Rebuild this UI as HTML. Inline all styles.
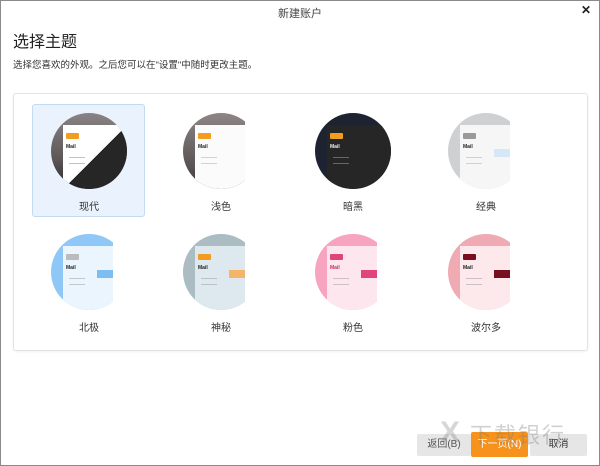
<!DOCTYPE html>
<html><head><meta charset="utf-8"><style>
*{margin:0;padding:0;box-sizing:border-box}
body{width:600px;height:466px;overflow:hidden;background:#fff;font-family:"Liberation Sans","Noto Sans CJK SC",sans-serif;position:relative;color:#333}
.win{position:absolute;left:0;top:0;width:600px;height:466px;border:1px solid #8a8a8a}
.title{position:absolute;top:5px;left:0;width:600px;text-align:center;font-size:11px;color:#444}
.close{position:absolute;top:3px;left:581px;font-size:12px;font-weight:bold;color:#222}
h1{position:absolute;left:13px;top:28px;font-size:16px;font-weight:normal;color:#222}
.sub{position:absolute;left:13px;top:57px;font-size:9.5px;color:#333}
.panel{position:absolute;left:13px;top:93px;width:575px;height:258px;border:1px solid #e3e3e3;border-radius:3px;box-shadow:0 1px 2px rgba(0,0,0,.06)}
.sel{position:absolute;left:32px;top:104px;width:113px;height:113px;background:#eaf3fd;border:1px solid #c3daf3;border-radius:3px}
.c{position:absolute;width:76px;height:76px;border-radius:50%;overflow:hidden;background:#fff}
.c .bg{position:absolute;left:0;top:0;width:62px;height:76px}
.c .pn{position:absolute;left:12px;top:12px;width:50px;height:64px}
.c .btn{position:absolute;left:15px;top:20px;width:13px;height:6px;border-radius:1px}
.c .m{position:absolute;left:15px;top:31px;font-size:5px;font-weight:bold}
.c .l{position:absolute;left:18px;height:1px;width:16px;opacity:.5}
.c .hl{position:absolute;left:46px;top:36px;width:16px;height:8px}
.lab{position:absolute;font-size:10px;color:#333;width:60px;text-align:center}
.b{position:absolute;top:434px;height:22px;font-size:10px;text-align:center;line-height:22px;border-radius:2px}
</style></head><body>
<div class="win"></div>
<div class="title">新建账户</div>
<div class="close">✕</div>
<h1>选择主题</h1>
<div class="sub">选择您喜欢的外观。之后您可以在"设置"中随时更改主题。</div>
<div class="panel"></div>
<div class="sel"></div>

<div class="c" style="left:51px;top:113px"><div class="bg" style="width:76px;background:linear-gradient(180deg,#8a8385,#5e5758 60%,#2a2a2a)"></div><div class="pn" style="width:64px;background:linear-gradient(135deg,#fff 50%,#262626 50%)"></div><div class="btn" style="background:#f39c1f"></div><div class="m" style="color:#222">Mail</div><div class="l" style="top:44px;background:#888"></div><div class="l" style="top:50px;background:#888"></div></div>
<div class="c" style="left:183px;top:113px"><div class="bg" style="background:linear-gradient(180deg,#8d8586,#5a5354 70%,#333)"></div><div class="pn" style="background:#fbfbfb"></div><div class="btn" style="background:#f39c1f"></div><div class="m" style="color:#222">Mail</div><div class="l" style="top:44px;background:#aaa"></div><div class="l" style="top:50px;background:#aaa"></div></div>
<div class="c" style="left:315px;top:113px"><div class="bg" style="width:76px;background:#1e2331"></div><div class="pn" style="width:64px;background:#262626"></div><div class="btn" style="background:#f39c1f"></div><div class="m" style="color:#eee">Mail</div><div class="l" style="top:44px;background:#aaa"></div><div class="l" style="top:50px;background:#aaa"></div></div>
<div class="c" style="left:448px;top:113px"><div class="bg" style="background:#cfd0d2"></div><div class="pn" style="background:#f6f6f6"></div><div class="btn" style="background:#999"></div><div class="m" style="color:#222">Mail</div><div class="l" style="top:44px;background:#aaa"></div><div class="l" style="top:50px;background:#aaa"></div><div class="hl" style="background:#d6e7f7"></div></div>
<div class="lab" style="left:59px;top:198px">现代</div>
<div class="lab" style="left:191px;top:198px">浅色</div>
<div class="lab" style="left:323px;top:198px">暗黑</div>
<div class="lab" style="left:456px;top:198px">经典</div>

<div class="c" style="left:51px;top:234px"><div class="bg" style="background:#8fc8f7"></div><div class="pn" style="background:#eaf5fd"></div><div class="btn" style="background:#bbb"></div><div class="m" style="color:#222">Mail</div><div class="l" style="top:44px;background:#999"></div><div class="l" style="top:50px;background:#999"></div><div class="hl" style="background:#7ebdf0"></div></div>
<div class="c" style="left:183px;top:234px"><div class="bg" style="background:#abbcc3"></div><div class="pn" style="background:#dde9ee"></div><div class="btn" style="background:#f39c1f"></div><div class="m" style="color:#222">Mail</div><div class="l" style="top:44px;background:#999"></div><div class="l" style="top:50px;background:#999"></div><div class="hl" style="background:#f6b36a"></div></div>
<div class="c" style="left:315px;top:234px"><div class="bg" style="background:#f7a4c0"></div><div class="pn" style="background:#fde6ee"></div><div class="btn" style="background:#e0447c"></div><div class="m" style="color:#c03060">Mail</div><div class="l" style="top:44px;background:#999"></div><div class="l" style="top:50px;background:#999"></div><div class="hl" style="background:#e0447c"></div></div>
<div class="c" style="left:448px;top:234px"><div class="bg" style="background:#f0aab4"></div><div class="pn" style="background:#fde9ec"></div><div class="btn" style="background:#7a0d1e"></div><div class="m" style="color:#222">Mail</div><div class="l" style="top:44px;background:#999"></div><div class="l" style="top:50px;background:#999"></div><div class="hl" style="background:#7a0d1e"></div></div>
<div class="lab" style="left:59px;top:319px">北极</div>
<div class="lab" style="left:191px;top:319px">神秘</div>
<div class="lab" style="left:323px;top:319px">粉色</div>
<div class="lab" style="left:456px;top:319px">波尔多</div>

<div class="b" style="left:417px;width:54px;background:#e6e6e6;color:#555">返回(B)</div>
<div class="b" style="left:471px;width:57px;top:432px;height:25px;line-height:25px;background:#f7921c;color:#fff">下一页(N)</div>
<div class="b" style="left:530px;width:57px;background:#e6e6e6;color:#333">取消</div>
<div style="position:absolute;left:470px;top:418px;font-size:22px;color:rgba(120,120,120,.35);letter-spacing:2px">下载银行</div>
<div style="position:absolute;left:440px;top:416px;font-size:30px;font-weight:bold;color:rgba(120,120,120,.3)">X</div>
</body></html>
